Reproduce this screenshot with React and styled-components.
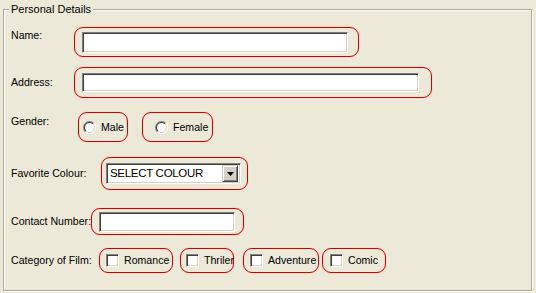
import React from "react";
import styled, { createGlobalStyle } from "styled-components";

const GlobalStyle = createGlobalStyle`
  html, body { margin: 0; padding: 0; background: #ece9d8; }
  body {
    font-family: "Liberation Sans", Arial, sans-serif;
    font-size: 10.6px;
    color: #000;
  }
`;

const Page = styled.div`
  width: 536px;
  height: 293px;
  box-sizing: border-box;
  padding: 3px 4px 0 3px;
  background: #ece9d8;
`;

const Group = styled.fieldset`
  margin: 0;
  box-sizing: border-box;
  height: 288px;
  padding: 0 0 0 7px;
  border: 1px solid #aca899;
  box-shadow: inset 1px 1px 0 #fff, 1px 1px 0 #fff;
  min-width: 0;
`;

const Legend = styled.legend`
  padding: 0 2px;
  margin-left: -2px;
  line-height: 13px;
  font-size: 11px;
  background: #ece9d8;
`;

const Row = styled.div`
  display: flex;
  align-items: ${(p) => p.$align || "center"};
  margin-top: ${(p) => p.$mt}px;
`;

const Label = styled.span`
  flex: none;
  width: ${(p) => p.$w}px;
  line-height: 13px;
  padding-top: ${(p) => p.$pt || 0}px;
  white-space: nowrap;
`;

const Frame = styled.div`
  flex: none;
  display: flex;
  align-items: center;
  box-sizing: border-box;
  width: ${(p) => p.$w}px;
  height: ${(p) => p.$h}px;
  padding-left: ${(p) => p.$pl}px;
  margin-left: ${(p) => p.$ml || 0}px;
  border: 1px solid #d00000;
  border-radius: 9px;
  box-shadow: 0 0 1px rgba(230, 60, 60, 0.55);
`;

const sunken = `
  box-sizing: border-box;
  border-style: solid;
  border-width: 1px;
  border-color: #808080 #ffffff #ffffff #808080;
  box-shadow: inset 1px 1px 0 #404040, inset -1px -1px 0 #d4d0c8;
  background: #fff;
`;

const TextBox = styled.input`
  ${sunken}
  flex: none;
  width: ${(p) => p.$w}px;
  height: ${(p) => p.$h}px;
  margin: 0;
  padding: 0 3px;
  outline: none;
  font: inherit;
`;

const OptionText = styled.span`
  margin-left: 5px;
  line-height: 13px;
  white-space: nowrap;
`;

const Check = styled.span`
  ${sunken}
  flex: none;
  display: block;
  width: 13px;
  height: 13px;
`;

const Select = styled.div`
  ${sunken}
  flex: none;
  display: flex;
  align-items: center;
  width: ${(p) => p.$w}px;
  height: 21px;
  padding: 2px;
`;

const SelectText = styled.span`
  flex: 1;
  padding-left: 1px;
  font-size: 11.5px;
  letter-spacing: -0.3px;
  line-height: 15px;
  white-space: nowrap;
  overflow: hidden;
`;

const DropButton = styled.span`
  flex: none;
  display: flex;
  align-items: center;
  justify-content: center;
  box-sizing: border-box;
  width: 16px;
  height: 17px;
  background: #d4d0c8;
  border-style: solid;
  border-width: 1px;
  border-color: #d4d0c8 #404040 #404040 #d4d0c8;
  box-shadow: inset 1px 1px 0 #fff, inset -1px -1px 0 #808080;
`;

const Radio = () => {
  const half = (r, first) => {
    const k = r * 0.7071;
    const x1 = 6.5 - k, y1 = 6.5 + k, x2 = 6.5 + k, y2 = 6.5 - k;
    return first
      ? `M${x1} ${y1} A${r} ${r} 0 0 1 ${x2} ${y2} Z`
      : `M${x2} ${y2} A${r} ${r} 0 0 1 ${x1} ${y1} Z`;
  };
  return (
    <svg width="13" height="13" viewBox="0 0 13 13" style={{ flex: "none", display: "block" }}>
      <path d={half(6.5, true)} fill="#808080" />
      <path d={half(6.5, false)} fill="#ffffff" />
      <path d={half(5.5, true)} fill="#404040" />
      <path d={half(5.5, false)} fill="#d4d0c8" />
      <circle cx="6.5" cy="6.5" r="4.5" fill="#ffffff" />
    </svg>
  );
};

const Arrow = () => (
  <svg width="7" height="4" viewBox="0 0 7 4" style={{ display: "block" }}>
    <path d="M0 0H7L3.5 4Z" fill="#000" />
  </svg>
);

const films = [
  { label: "Romance", w: 74, pl: 6, ml: 0 },
  { label: "Thriler", w: 54, pl: 5, ml: 7 },
  { label: "Adventure", w: 76, pl: 6, ml: 9 },
  { label: "Comic", w: 64, pl: 7, ml: 3 },
];

export default function App() {
  return (
    <>
      <GlobalStyle />
      <Page>
        <Group>
          <Legend>Personal Details</Legend>

          <Row $mt={11} $align="flex-start">
            <Label $w={63} $pt={2}>Name:</Label>
            <Frame $w={285} $h={30} $pl={7}>
              <TextBox $w={266} $h={21} />
            </Frame>
          </Row>

          <Row $mt={10}>
            <Label $w={63}>Address:</Label>
            <Frame $w={358} $h={31} $pl={7}>
              <TextBox $w={337} $h={19} />
            </Frame>
          </Row>

          <Row $mt={14} $align="flex-start">
            <Label $w={67} $pt={3}>Gender:</Label>
            <Frame $w={50} $h={30} $pl={4}>
              <Radio />
              <OptionText>Male</OptionText>
            </Frame>
            <Frame $w={71} $h={30} $pl={12} $ml={14}>
              <Radio />
              <OptionText>Female</OptionText>
            </Frame>
          </Row>

          <Row $mt={15}>
            <Label $w={90}>Favorite Colour:</Label>
            <Frame $w={147} $h={33} $pl={4}>
              <Select $w={135}>
                <SelectText>SELECT COLOUR</SelectText>
                <DropButton>
                  <Arrow />
                </DropButton>
              </Select>
            </Frame>
          </Row>

          <Row $mt={18}>
            <Label $w={80}>Contact Number:</Label>
            <Frame $w={153} $h={27} $pl={7}>
              <TextBox $w={136} $h={20} />
            </Frame>
          </Row>

          <Row $mt={13}>
            <Label $w={88}>Category of Film:</Label>
            {films.map((f) => (
              <Frame key={f.label} $w={f.w} $h={25} $pl={f.pl} $ml={f.ml}>
                <Check />
                <OptionText>{f.label}</OptionText>
              </Frame>
            ))}
          </Row>
        </Group>
      </Page>
    </>
  );
}
